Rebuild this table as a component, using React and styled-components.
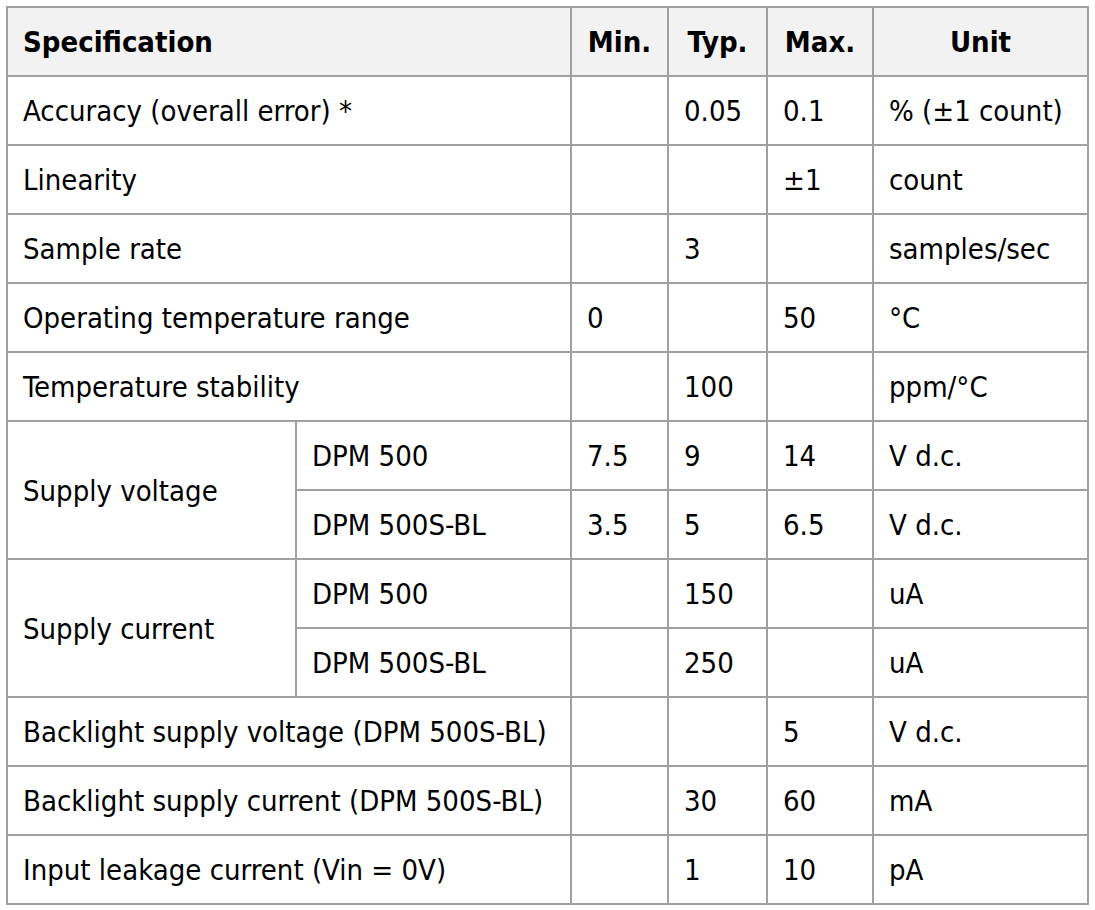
import React from "react";
import styled, { createGlobalStyle } from "styled-components";

const GlobalStyle = createGlobalStyle`
  html, body {
    margin: 0;
    padding: 0;
    background: #ffffff;
  }
  body {
    font-family: "DejaVu Sans Condensed", "DejaVu Sans", sans-serif;
    color: #000;
  }
`;

const Page = styled.div`
  padding: 6px 0 0 6px;
`;

const Table = styled.table`
  border-collapse: collapse;
  table-layout: fixed;
  width: 1081px;
  font-size: 29px;
  line-height: 1.2;
`;

const Head = styled.th`
  background: #f2f2f2;
  border: 2px solid #a0a0a0;
  height: 65px;
  padding: 2px 15px 0;
  font-weight: bold;
  text-align: ${(p) => (p.$left ? "left" : "center")};
  vertical-align: middle;
`;

const Cell = styled.td`
  border: 2px solid #a0a0a0;
  height: 65px;
  padding: 2px 15px 0;
  text-align: left;
  vertical-align: middle;
  white-space: nowrap;
`;

const rows = [
  { spec: "Accuracy (overall error) *", typ: "0.05", max: "0.1", unit: "% (±1 count)" },
  { spec: "Linearity", max: "±1", unit: "count" },
  { spec: "Sample rate", typ: "3", unit: "samples/sec" },
  { spec: "Operating temperature range", min: "0", max: "50", unit: "°C" },
  { spec: "Temperature stability", typ: "100", unit: "ppm/°C" },
  {
    spec: "Supply voltage",
    sub: [
      { name: "DPM 500", min: "7.5", typ: "9", max: "14", unit: "V d.c." },
      { name: "DPM 500S-BL", min: "3.5", typ: "5", max: "6.5", unit: "V d.c." },
    ],
  },
  {
    spec: "Supply current",
    sub: [
      { name: "DPM 500", typ: "150", unit: "uA" },
      { name: "DPM 500S-BL", typ: "250", unit: "uA" },
    ],
  },
  { spec: "Backlight supply voltage (DPM 500S-BL)", max: "5", unit: "V d.c." },
  { spec: "Backlight supply current (DPM 500S-BL)", typ: "30", max: "60", unit: "mA" },
  { spec: "Input leakage current (Vin = 0V)", typ: "1", max: "10", unit: "pA" },
];

const Values = ({ r }) => (
  <>
    <Cell>{r.min}</Cell>
    <Cell>{r.typ}</Cell>
    <Cell>{r.max}</Cell>
    <Cell>{r.unit}</Cell>
  </>
);

export default function App() {
  return (
    <Page>
      <GlobalStyle />
      <Table>
        <colgroup>
          <col style={{ width: 289 }} />
          <col style={{ width: 275 }} />
          <col style={{ width: 97 }} />
          <col style={{ width: 99 }} />
          <col style={{ width: 106 }} />
          <col style={{ width: 215 }} />
        </colgroup>
        <thead>
          <tr>
            <Head $left colSpan={2}>Specification</Head>
            <Head>Min.</Head>
            <Head>Typ.</Head>
            <Head>Max.</Head>
            <Head>Unit</Head>
          </tr>
        </thead>
        <tbody>
          {rows.map((r) =>
            r.sub ? (
              r.sub.map((s, i) => (
                <tr key={r.spec + s.name}>
                  {i === 0 && <Cell rowSpan={r.sub.length}>{r.spec}</Cell>}
                  <Cell>{s.name}</Cell>
                  <Values r={s} />
                </tr>
              ))
            ) : (
              <tr key={r.spec}>
                <Cell colSpan={2}>{r.spec}</Cell>
                <Values r={r} />
              </tr>
            )
          )}
        </tbody>
      </Table>
    </Page>
  );
}
